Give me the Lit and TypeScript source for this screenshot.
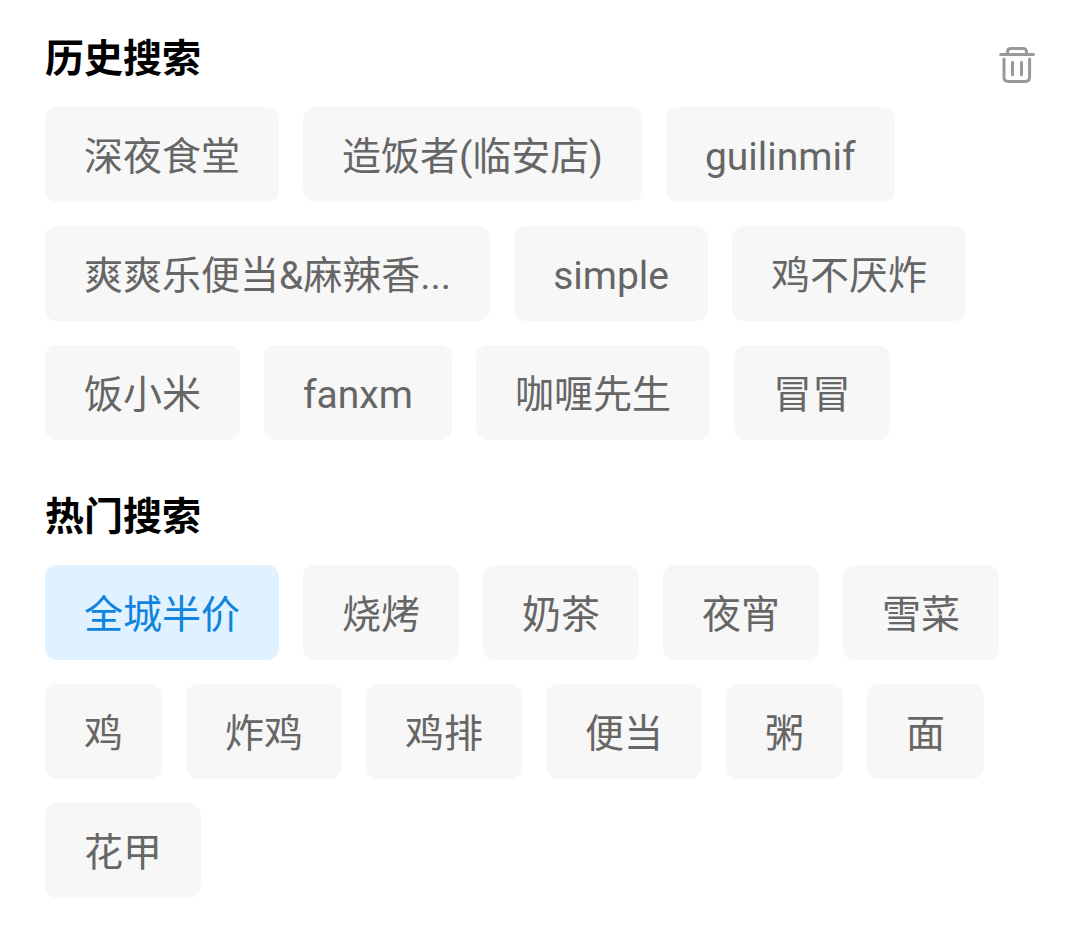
import { LitElement, html, css } from "lit";
import { customElement, property, state } from "lit/decorators.js";
import { classMap } from "lit/directives/class-map.js";

interface Term {
  text: string;
  hot?: boolean;
}

@customElement("search-tags")
class SearchTags extends LitElement {
  static styles = css`
    :host {
      display: block;
    }
    .list {
      display: flex;
      flex-wrap: wrap;
      gap: 24px;
      margin: 0;
      padding: 0;
      list-style: none;
    }
    .item {
      display: flex;
    }
    .tag {
      padding: 26px 39px 21px;
      border: 0;
      border-radius: 12px;
      background: #f7f7f7;
      color: #666;
      font: inherit;
      font-size: 39px;
      line-height: 48px;
      white-space: nowrap;
      cursor: pointer;
    }
    .hot {
      background: #e0f2ff;
      color: #0f84de;
    }
  `;

  @property({ attribute: false }) terms: Term[] = [];

  render() {
    return html`<ul class="list">
      ${this.terms.map(
        (t) => html`<li class="item"><button type="button" class=${classMap({ tag: true, hot: !!t.hot })}>${t.text}</button></li>`
      )}
    </ul>`;
  }
}

@customElement("app-root")
class AppRoot extends LitElement {
  static styles = css`
    :host {
      display: block;
      padding: 35px 45px 39px;
      background: #fff;
      font-family: Roboto, "Noto Sans CJK SC", sans-serif;
    }
    .section + .section {
      margin-top: 53px;
    }
    .head {
      display: flex;
      align-items: center;
      justify-content: space-between;
      height: 48px;
      margin-bottom: 24px;
    }
    .title {
      margin: 0;
      color: #000;
      font-size: 39px;
      font-weight: 700;
      line-height: 48px;
    }
    .clear {
      display: flex;
      padding: 12px 0 0;
      border: 0;
      background: none;
      color: #999;
      cursor: pointer;
    }
  `;

  @state() private recent: Term[] = [
    "深夜食堂", "造饭者(临安店)", "guilinmif", "爽爽乐便当&麻辣香...", "simple",
    "鸡不厌炸", "饭小米", "fanxm", "咖喱先生", "冒冒",
  ].map((text) => ({ text }));

  private popular: Term[] = [
    { text: "全城半价", hot: true },
    ...["烧烤", "奶茶", "夜宵", "雪菜", "鸡", "炸鸡", "鸡排", "便当", "粥", "面", "花甲"].map((text) => ({ text })),
  ];

  private clearRecent() {
    this.recent = [];
  }

  render() {
    return html`
      <section class="section">
        <div class="head">
          <h2 class="title">历史搜索</h2>
          <button class="clear" type="button" aria-label="清空历史搜索" @click=${this.clearRecent}>
            <svg width="36" height="36" viewBox="0 0 36 36" fill="none" stroke="currentColor" stroke-width="3" stroke-linecap="round" aria-hidden="true">
              <path d="M1.600 7.500H34.400M8.500 7V5Q8.500 1.500 12 1.500H24Q27.500 1.500 27.500 5V7M5 12V30Q5 34.400 9.400 34.400H26.200Q30.600 34.400 30.600 30V12M13.500 15.200V27.800M22.500 15.200V27.800" />
            </svg>
          </button>
        </div>
        <search-tags .terms=${this.recent}></search-tags>
      </section>
      <section class="section">
        <div class="head">
          <h2 class="title">热门搜索</h2>
        </div>
        <search-tags .terms=${this.popular}></search-tags>
      </section>
    `;
  }
}
